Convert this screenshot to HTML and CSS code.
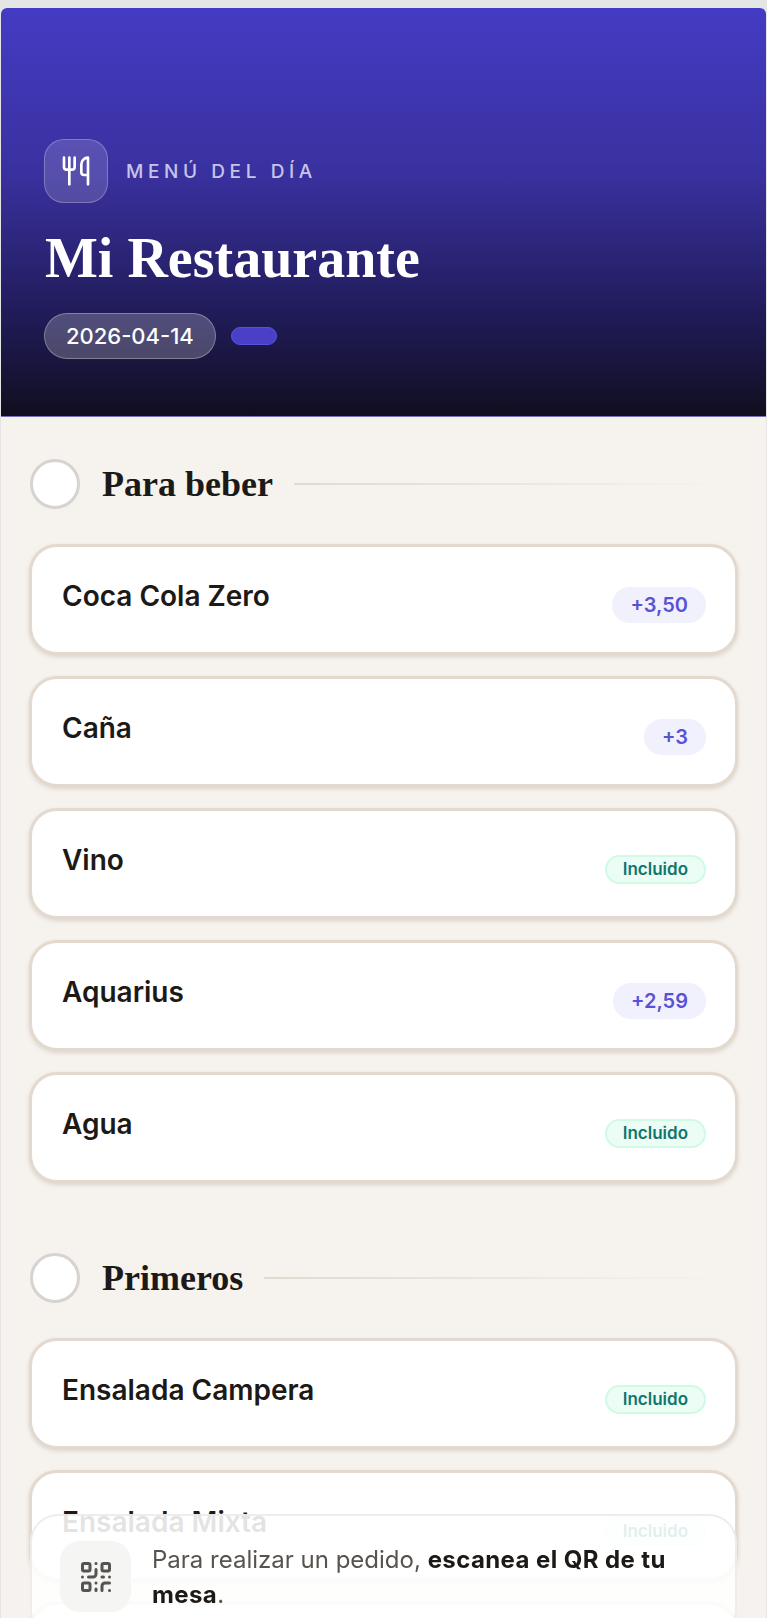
FILE: index.html
```html
<!DOCTYPE html>
<html lang="es">
<head>
    <meta charset="UTF-8">
    <meta name="viewport" content="width=device-width, initial-scale=1.0">
    <title>Mi Restaurante</title>
    <link rel="stylesheet" href="styles.css">
</head>
<body>
    <div class="page">
        <header class="hero">
            <div class="hero-top">
                <div class="hero-icon">
                    <svg viewBox="0 0 24 24" width="32" height="32" fill="none" stroke="#fff" stroke-width="2" stroke-linecap="round" stroke-linejoin="round">
                        <path d="M3 2v7c0 1.100.9 2 2 2h4a2 2 0 0 0 2-2V2"/>
                        <path d="M7 2v20"/>
                        <path d="M21 15V2a5 5 0 0 0-5 5v6c0 1.100.9 2 2 2h3Zm0 0v7"/>
                    </svg>
                </div>
                <span class="hero-label">MENÚ DEL DÍA</span>
            </div>
            <h1>Mi Restaurante</h1>
            <div class="hero-pills">
                <span class="date-pill">2026-04-14</span>
                <span class="empty-pill"></span>
            </div>
        </header>

        <main class="content">
            <section class="menu-section">
                <div class="section-head">
                    <span class="section-dot"></span>
                    <h2>Para beber</h2>
                    <span class="section-line"></span>
                </div>
                <div class="dish-list">
                    <div class="dish"><span class="dish-name">Coca Cola Zero</span><span class="price">+3,50</span></div>
                    <div class="dish"><span class="dish-name">Caña</span><span class="price">+3</span></div>
                    <div class="dish"><span class="dish-name">Vino</span><span class="included">Incluido</span></div>
                    <div class="dish"><span class="dish-name">Aquarius</span><span class="price">+2,59</span></div>
                    <div class="dish"><span class="dish-name">Agua</span><span class="included">Incluido</span></div>
                </div>
            </section>

            <section class="menu-section">
                <div class="section-head">
                    <span class="section-dot"></span>
                    <h2>Primeros</h2>
                    <span class="section-line"></span>
                </div>
                <div class="dish-list">
                    <div class="dish"><span class="dish-name">Ensalada Campera</span><span class="included">Incluido</span></div>
                    <div class="dish"><span class="dish-name">Ensalada Mixta</span><span class="included">Incluido</span></div>
                    <div class="dish"></div>
                </div>
            </section>
        </main>

        <div class="order-note">
            <div class="note-icon">
                <svg viewBox="0 0 24 24" width="36" height="36" fill="none" stroke="#57534e" stroke-width="2" stroke-linecap="round" stroke-linejoin="round">
                    <rect x="3" y="3" width="5" height="5" rx="1"/>
                    <rect x="16" y="3" width="5" height="5" rx="1"/>
                    <rect x="3" y="16" width="5" height="5" rx="1"/>
                    <path d="M21 16h-3a2 2 0 0 0-2 2v3"/>
                    <path d="M21 21v.01"/>
                    <path d="M12 7v3a2 2 0 0 1-2 2H7"/>
                    <path d="M3 12h.01"/>
                    <path d="M12 3h.01"/>
                    <path d="M12 16v.01"/>
                    <path d="M16 12h1"/>
                    <path d="M21 12v.01"/>
                    <path d="M12 21v-1"/>
                </svg>
            </div>
            <p>Para realizar un pedido, <strong>escanea el QR de tu mesa</strong>.</p>
        </div>
    </div>
</body>
</html>
```

FILE: styles.css
```css
/* Menu page, phone layout */
html, body {
    height: 100%;
    margin: 0;
    overflow: hidden;
}

body {
    background-color: #e5e5e5;
    font-family: 'Inter', 'Noto Sans', sans-serif;
    color: #1c1917;
    padding-top: 8px;
    box-sizing: border-box;
}

.page {
    height: 100%;
    margin: 0 1px;
    border-radius: 6px 6px 0 0;
    background-color: #f6f2ed;
    overflow: hidden;
}

.hero {
    height: 409px;
    box-sizing: border-box;
    padding: 131px 43px 0;
    background: linear-gradient(180deg, #443bc4 0%, #3a31a0 40%, #1e1a52 78%, #110e1f 100%);
    border-bottom: 1px solid #7a72b8;
}

.hero-top {
    display: flex;
    align-items: center;
    gap: 18px;
}

.hero-icon {
    width: 64px;
    height: 64px;
    box-sizing: border-box;
    display: flex;
    align-items: center;
    justify-content: center;
    background-color: rgba(255, 255, 255, 0.15);
    border: 1px solid rgba(255, 255, 255, 0.25);
    border-radius: 20px;
}

.hero-label {
    font-size: 19px;
    font-weight: 500;
    letter-spacing: 4.600px;
    color: #c7c4ea;
}

h1 {
    margin: 20px 0 0 1px;
    font-family: 'Liberation Serif', serif;
    font-size: 56px;
    line-height: 70px;
    font-weight: 700;
    color: #fff;
}

.hero-pills {
    display: flex;
    align-items: center;
    gap: 15px;
    margin-top: 20px;
}

.date-pill {
    box-sizing: border-box;
    height: 46px;
    padding: 0 21px;
    display: flex;
    align-items: center;
    font-size: 22px;
    font-weight: 500;
    color: #fff;
    background-color: rgba(255, 255, 255, 0.22);
    border: 1px solid rgba(255, 255, 255, 0.3);
    border-radius: 23px;
}

.empty-pill {
    width: 46px;
    height: 18px;
    box-sizing: border-box;
    background-color: #4a40c8;
    border: 1px solid #5a50e0;
    border-radius: 9px;
}

.content {
    padding: 42px 28px 0;
}

.menu-section + .menu-section {
    margin-top: 70px;
}

.section-head {
    display: flex;
    align-items: center;
    height: 50px;
    margin-bottom: 35px;
}

.section-dot {
    width: 50px;
    height: 50px;
    box-sizing: border-box;
    margin-left: 1px;
    background-color: #fff;
    border: 3px solid #d6d3d1;
    border-radius: 50%;
    margin-right: 22px;
}

h2 {
    margin: 0 21px 0 0;
    font-family: 'Liberation Serif', serif;
    font-size: 36px;
    font-weight: 700;
    color: #1c1917;
}

.section-line {
    flex: 1;
    height: 2px;
    margin-right: 10px;
    background: linear-gradient(90deg, #e2d9cf, rgba(226, 217, 207, 0));
}

.dish-list {
    display: flex;
    flex-direction: column;
    gap: 21px;
}

.dish {
    height: 111px;
    flex-shrink: 0;
    box-sizing: border-box;
    display: flex;
    justify-content: space-between;
    padding: 0 29px 0 30px;
    background-color: #fff;
    border: 3px solid #e3d9ce;
    border-radius: 28px;
    box-shadow: 0 2px 4px rgba(120, 100, 80, 0.2);
}

.dish-name {
    margin-top: 32px;
    font-size: 28px;
    line-height: 34px;
    font-weight: 600;
}

.price {
    align-self: flex-start;
    margin-top: 40px;
    padding: 0 18px;
    height: 36px;
    line-height: 36px;
    font-size: 20px;
    font-weight: 600;
    color: #5a52d5;
    background-color: #f1f0fd;
    border-radius: 18px;
}

.included {
    align-self: flex-start;
    margin-top: 44px;
    box-sizing: border-box;
    height: 29px;
    padding: 0 16px;
    line-height: 25px;
    font-size: 17px;
    font-weight: 600;
    color: #0f766e;
    background-color: #ecfdf5;
    border: 2px solid #d1fae5;
    border-radius: 15px;
}

/* stays over the list at the bottom of the window */
.order-note {
    position: fixed;
    left: 30px;
    right: 30px;
    bottom: -21px;
    box-sizing: border-box;
    height: 125px;
    padding: 27px 28px;
    display: flex;
    align-items: center;
    gap: 21px;
    background-color: rgba(255, 255, 255, 0.88);
    border: 2px solid rgba(231, 229, 228, 0.7);
    border-radius: 28px;
}

.note-icon {
    width: 71px;
    height: 71px;
    flex-shrink: 0;
    display: flex;
    align-items: center;
    justify-content: center;
    background-color: #f5f5f4;
    border-radius: 20px;
}

.order-note p {
    margin: 0;
    font-size: 24px;
    line-height: 35px;
    color: #57534e;
}

.order-note strong {
    font-weight: 700;
    letter-spacing: 0.400px;
    color: #1c1917;
}
```
